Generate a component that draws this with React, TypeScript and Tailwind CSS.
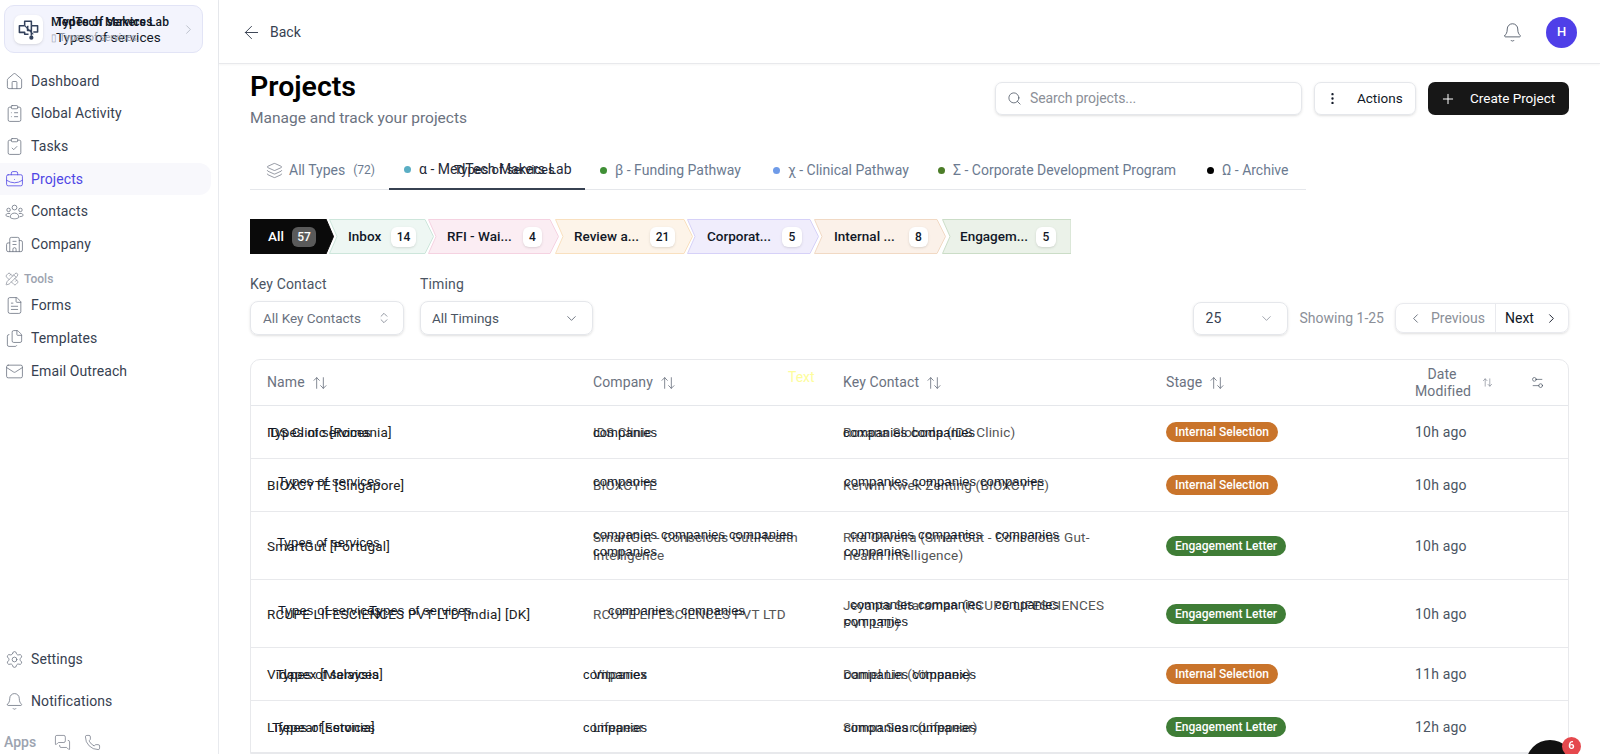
import {
  ArrowLeft,
  ArrowUpDown,
  Bell,
  BriefcaseBusiness,
  Building2,
  ChevronDown,
  ChevronLeft,
  ChevronRight,
  ChevronsUpDown,
  ClipboardCheck,
  ClipboardList,
  EllipsisVertical,
  FileText,
  Files,
  House,
  Layers,
  Mail,
  MessagesSquare,
  PencilRuler,
  Phone,
  Plus,
  Search,
  Settings,
  Settings2,
} from "lucide-react";
import type { ComponentType, ReactNode } from "react";

const FONT = "font-['Roboto','Noto_Sans',sans-serif]";

type IconType = ComponentType<{ size?: number; strokeWidth?: number; className?: string }>;

function GroupIcon({ size = 18, strokeWidth = 1, className }: { size?: number; strokeWidth?: number; className?: string }) {
  return (
    <svg width={size} height={size} viewBox="0 0 24 24" fill="none" stroke="currentColor" strokeWidth={strokeWidth} className={className}>
      <circle cx="12" cy="7" r="3" />
      <circle cx="4.5" cy="10" r="2.2" />
      <circle cx="19.5" cy="10" r="2.2" />
      <path d="M6.5 19.5c0-3.5 2.5-5.5 5.5-5.5s5.5 2 5.5 5.5c-1.5 1.2-3.3 1.7-5.5 1.7s-4-.5-5.5-1.7Z" />
      <path d="M6.5 14.5H3.5c-1.3 0-2.3 1-2.3 2.3 0 .9 1.5 1.6 4.3 1.7" />
      <path d="M17.5 14.5h3c1.3 0 2.3 1 2.3 2.3 0 .9-1.5 1.6-4.3 1.7" />
    </svg>
  );
}

const MAIN_NAV: { label: string; icon: IconType; active?: boolean }[] = [
  { label: "Dashboard", icon: House },
  { label: "Global Activity", icon: ClipboardList },
  { label: "Tasks", icon: ClipboardCheck },
  { label: "Projects", icon: BriefcaseBusiness, active: true },
  { label: "Contacts", icon: GroupIcon },
  { label: "Company", icon: Building2 },
];

const TOOLS_NAV: { label: string; icon: IconType }[] = [
  { label: "Forms", icon: FileText },
  { label: "Templates", icon: Files },
  { label: "Email Outreach", icon: Mail },
];

const STAGES = [
  { label: "All", count: "57", w: 84, fill: "#0a0a0a", line: "#0a0a0a", box: "w-[84px] pl-[18px] text-white", text: "w-[24px]", badge: "w-[24px] bg-[#5a5a5a] text-white" },
  { label: "Inbox", count: "14", w: 105, fill: "#eef7f3", line: "#cde6db", box: "w-[105px] -ml-[5px] pl-[19px] text-[#111827]", text: "w-[43px]", badge: "w-[25px] bg-white text-[#111827] shadow-sm" },
  { label: "RFI - Wai...", count: "4", w: 131, fill: "#fbedf3", line: "#f5d2e1", box: "w-[131px] -ml-[6px] pl-[19px] text-[#111827]", text: "w-[76px]", badge: "w-[19px] bg-white text-[#111827] shadow-sm" },
  { label: "Review a...", count: "21", w: 138, fill: "#fdf4e9", line: "#f9e0bf", box: "w-[138px] -ml-[4px] pl-[19px] text-[#111827]", text: "w-[76px]", badge: "w-[25px] bg-white text-[#111827] shadow-sm" },
  { label: "Corporat...", count: "5", w: 132, fill: "#f0edfc", line: "#d6d1f8", box: "w-[132px] -ml-[6px] pl-[20px] text-[#111827]", text: "w-[75px]", badge: "w-[20px] bg-white text-[#111827] shadow-sm" },
  { label: "Internal ...", count: "8", w: 132, fill: "#fbf1e9", line: "#f1d9c4", box: "w-[132px] -ml-[5px] pl-[20px] text-[#111827]", text: "w-[75px]", badge: "w-[19px] bg-white text-[#111827] shadow-sm" },
  { label: "Engagem...", count: "5", w: 129, fill: "#ebf2e9", line: "#cbddc7", box: "w-[129px] -ml-[4px] pl-[18px] text-[#111827]", text: "w-[76px]", badge: "w-[20px] bg-white text-[#111827] shadow-sm" },
];

const TABS = [
  { label: "α - MedTech Makers Lab", dot: "bg-[#5aaec4]", box: "w-[196px] pl-[15px]", active: true },
  { label: "β - Funding Pathway", dot: "bg-[#3f8f35]", box: "w-[171px] pl-[15px]" },
  { label: "χ - Clinical Pathway", dot: "bg-[#6f9be8]", box: "w-[169px] pl-[17px]" },
  { label: "Σ - Corporate Development Program", dot: "bg-[#4c7d28]", box: "w-[274px] pl-[13px]" },
  { label: "Ω - Archive", dot: "bg-black", box: "w-[92px] pl-[8px]" },
];

type Over = { text: string; className: string };
type Row = {
  name: string;
  company: string;
  contact: string;
  stage: "Internal Selection" | "Engagement Letter";
  date: string;
  height: string;
  overName: Over[];
  overCompany: Over[];
  overContact: Over[];
};

const ROWS: Row[] = [
  {
    name: "IDS Clinic [Romania]",
    company: "IDS Clinic",
    contact: "Roxana Sloboda (IDS Clinic)",
    stage: "Internal Selection",
    date: "10h ago",
    height: "h-[53px]",
    overName: [{ text: "Types of services", className: "left-[17px] top-[18px]" }],
    overCompany: [{ text: "companies", className: "left-0 top-[18px]" }],
    overContact: [{ text: "companies companies", className: "left-0 top-[18px]" }],
  },
  {
    name: "BIOXCYTE [Singapore]",
    company: "BIOXCYTE",
    contact: "Kerwin Kwek Zenting (BIOXCYTE)",
    stage: "Internal Selection",
    date: "10h ago",
    height: "h-[53px]",
    overName: [{ text: "Types of services", className: "left-[27px] top-[14px]" }],
    overCompany: [{ text: "companies", className: "left-0 top-[14px]" }],
    overContact: [{ text: "companies companies companies", className: "left-[1px] top-[14px]" }],
  },
  {
    name: "SmartGut [Portugal]",
    company: "SmartGut - Conscious Gut-Health Intelligence",
    contact: "Rita Oliveira (SmartGut - Conscious Gut-Health Intelligence)",
    stage: "Engagement Letter",
    date: "10h ago",
    height: "h-[68px]",
    overName: [{ text: "Types of services", className: "left-[26px] top-[22px]" }],
    overCompany: [
      { text: "companies companies companies", className: "left-0 top-[14px]" },
      { text: "companies", className: "left-0 top-[31px]" },
    ],
    overContact: [
      { text: "companies companies", className: "left-[7px] top-[14px]" },
      { text: "companies", className: "left-[152px] top-[14px]" },
      { text: "companies", className: "left-[1px] top-[31px]" },
    ],
  },
  {
    name: "RCUPE LIFESCIENCES PVT LTD [India] [DK]",
    company: "RCUPE LIFESCIENCES PVT LTD",
    contact: "Jeyanta Sitaraman (RCUPE LIFESCIENCES PVT LTD)",
    stage: "Engagement Letter",
    date: "10h ago",
    height: "h-[68px]",
    overName: [
      { text: "Types of services", className: "left-[27px] top-[22px]" },
      { text: "Types of services", className: "left-[118px] top-[22px]" },
    ],
    overCompany: [
      { text: "companies", className: "left-[15px] top-[22px]" },
      { text: "companies", className: "left-[88px] top-[22px]" },
    ],
    overContact: [
      { text: "companies companies", className: "left-[7px] top-[16px]" },
      { text: "companies", className: "left-[152px] top-[16px]" },
      { text: "companies", className: "left-[1px] top-[33px]" },
    ],
  },
  {
    name: "Vidapex [Malaysia]",
    company: "Vitpanex",
    contact: "Daniel Lin (Vitpanex)",
    stage: "Internal Selection",
    date: "11h ago",
    height: "h-[53px]",
    overName: [{ text: "Types of services", className: "left-[25px] top-[18px]" }],
    overCompany: [{ text: "companies", className: "-left-[10px] top-[18px]" }],
    overContact: [{ text: "companies companies", className: "left-[1px] top-[18px]" }],
  },
  {
    name: "Lifepear [Estonia]",
    company: "Lifepear",
    contact: "Simon Saar (Lifepear)",
    stage: "Engagement Letter",
    date: "12h ago",
    height: "h-[52px]",
    overName: [{ text: "Types of services", className: "left-[21px] top-[18px]" }],
    overCompany: [{ text: "companies", className: "-left-[10px] top-[18px]" }],
    overContact: [{ text: "companies companies", className: "left-[1px] top-[18px]" }],
  },
];

function Logo() {
  return (
    <svg viewBox="0 0 24 24" className="h-[23px] w-[23px] text-[#33415c]" fill="none" stroke="currentColor" strokeWidth="1.6" strokeLinejoin="round">
      <path d="M8 8V3.5h7V8" />
      <path d="M8 8H2.5v7H8v2h4" />
      <path d="M15 8h6.5v6.5H17" />
      <path d="M12 9h-1v4h4v5.5M15 8v5" />
      <path d="M8 8l9 9" strokeWidth="1.1" />
      <circle cx="15" cy="20.5" r="1.4" fill="currentColor" />
    </svg>
  );
}

function NavItem({ label, icon: Icon, active }: { label: string; icon: IconType; active?: boolean }) {
  return (
    <div className={`flex h-[32.6px] items-center gap-[7px] pl-[5px] text-[14px] tracking-[0.1px] ${active ? "rounded-r-xl bg-[#f8f8fc] text-[#4f46e5]" : "text-[#374151]"}`}>
      <Icon size={19} strokeWidth={1} className={active ? "text-[#4f46e5]" : "text-[#6b7280]"} />
      <span>{label}</span>
    </div>
  );
}

function SortHeader({ children }: { children: ReactNode }) {
  return (
    <div className="flex items-center gap-[7px]">
      {children}
      <ArrowUpDown size={16} strokeWidth={1.25} className="text-[#6b7280]" />
    </div>
  );
}

function Overlay({ items }: { items: Over[] }) {
  return (
    <>
      {items.map((o, i) => (
        <span key={i} className={`absolute whitespace-nowrap font-['Liberation_Sans',sans-serif] text-[13px] leading-[18px] tracking-[0.15px] text-[#111827] ${o.className}`}>
          {o.text}
        </span>
      ))}
    </>
  );
}

export default function App() {
  return (
    <div className={`flex h-screen overflow-hidden bg-white ${FONT}`}>
      <aside className="flex w-[219px] shrink-0 flex-col border-r border-[#e8eaee] pr-[7px]">
        <div className="relative mx-[4px] mt-[5px] flex h-[48px] w-[199px] items-center rounded-[10px] border border-[#e2e4f6] bg-[#f3f4fd] pl-[9px]">
          <div className="flex h-[29px] w-[29px] items-center justify-center rounded-[7px] bg-white shadow-sm">
            <Logo />
          </div>
          <div className="relative ml-[8px] h-full flex-1 text-[#111827]">
            <span className="absolute left-0 top-[9px] whitespace-nowrap text-[12px] font-medium leading-[14px] tracking-[0.15px]">MedTech Makers Lab</span>
            <span className="absolute left-[5px] top-[9px] whitespace-nowrap text-[12px] font-medium leading-[14px] tracking-[0.15px]">Types of services</span>
            <span className="absolute left-[5px] top-[23px] whitespace-nowrap text-[13.5px] leading-[16px]">Types of services</span>
            <span className="absolute left-0 top-[25px] whitespace-nowrap text-[10px] leading-[14px] text-[#9ca3af]">▯ Types of services.</span>
          </div>
          <ChevronRight size={15} strokeWidth={1} className="mr-[6px] text-[#9ca3af]" />
        </div>

        <nav className="mt-[12px] flex flex-col">
          {MAIN_NAV.map((item) => (
            <NavItem key={item.label} {...item} />
          ))}
        </nav>

        <div className="mt-[10px] flex h-[16px] items-center gap-[5px] pl-[5px] text-[12px] font-medium text-[#9ca3af]">
          <PencilRuler size={14} strokeWidth={1} className="text-[#6b7280]" />
          <span>Tools</span>
        </div>
        <nav className="mt-[3px] flex flex-col">
          {TOOLS_NAV.map((item) => (
            <NavItem key={item.label} {...item} />
          ))}
        </nav>

        <div className="mt-auto flex flex-col gap-[10px]">
          <NavItem label="Settings" icon={Settings} />
          <NavItem label="Notifications" icon={Bell} />
        </div>
        <div className="mb-[3px] mt-[15px] flex h-[18px] items-center pl-[4px] text-[14px] font-medium text-[#9ca3af]">
          <span>Apps</span>
          <MessagesSquare size={17} strokeWidth={1} className="ml-[18px] text-[#6b7280]" />
          <Phone size={17} strokeWidth={1} className="ml-[13px] text-[#6b7280]" />
        </div>
      </aside>

      <div className="flex min-w-0 flex-1 flex-col">
        <header className="flex h-[64px] shrink-0 items-center border-b border-[#e8e9ec] pl-[24px] pr-[23px] pt-[1px] shadow-[0_1px_2px_rgba(0,0,0,0.04)]">
          <ArrowLeft size={21} strokeWidth={1.1} className="-ml-[2px] text-[#374151]" />
          <span className="ml-[8px] text-[14px] text-[#374151]">Back</span>
          <Bell size={21} strokeWidth={1} className="ml-auto text-[#4b5563]" />
          <div className="ml-[23px] flex h-[31px] w-[31px] items-center justify-center rounded-full bg-[#4f3fe8] text-[13px] font-medium text-white">H</div>
        </header>

        <main className="flex-1 pl-[31px] pr-[31px]">
          <div className="flex h-[76px] items-start">
            <div className="pt-[5px]">
              <h1 className="text-[28.5px] font-semibold leading-[36px] text-black">Projects</h1>
              <p className="mt-[3px] text-[15.5px] leading-[21px] text-[#6b7280]">Manage and track your projects</p>
            </div>
            <div className="ml-auto mt-[18px] flex items-center">
              <div className="flex h-[33px] w-[307px] items-center gap-[8px] rounded-[7px] border border-[#e5e7eb] pl-[11px] shadow-sm">
                <Search size={15} strokeWidth={1.25} className="text-[#4b5563]" />
                <span className="text-[14px] tracking-[-0.1px] text-[#8b8f98]">Search projects...</span>
              </div>
              <div className="ml-[12px] flex h-[33px] w-[102px] items-center rounded-[7px] border border-[#e5e7eb] pl-[10px] text-[13.5px] font-normal text-[#111827] shadow-sm">
                <EllipsisVertical size={15} strokeWidth={1.75} />
                <span className="ml-[17px]">Actions</span>
              </div>
              <div className="ml-[12px] flex h-[33px] w-[141px] items-center rounded-[7px] bg-[#171717] pl-[12px] text-[13.5px] font-normal text-white">
                <Plus size={16} strokeWidth={1.5} />
                <span className="ml-[14px]">Create Project</span>
              </div>
            </div>
          </div>

          <div className="mt-[14px] flex h-[36px] w-[1056px] border-b border-[#e5e7eb] text-[14px] text-[#6b7a90]">
            <div className="flex w-[139px] items-center pb-[3px] pl-[16px]">
              <Layers size={17} strokeWidth={1} className="text-[#6b7280]" />
              <span className="ml-[6px]">All Types</span>
              <span className="ml-[8px] text-[12px]">(72)</span>
            </div>
            {TABS.map((t) => (
              <div key={t.label} className={`relative flex items-center gap-[8px] pb-[3px] ${t.box} ${t.active ? "-mb-px border-b-2 border-[#374151] text-[#1f2937]" : ""}`}>
                <span className={`h-[7px] w-[7px] shrink-0 rounded-full ${t.dot}`} />
                <span className="whitespace-nowrap">{t.label}</span>
                {t.active && <span className="absolute left-[65px] top-[6px] whitespace-nowrap text-[13px] text-[#1f2937]">Types of services</span>}
              </div>
            ))}
          </div>

          <div className="mt-[29px] flex h-[35px]">
            {STAGES.map((s, i) => (
              <div key={s.label} className={`relative flex h-[35px] shrink-0 items-center text-[13.5px] font-medium ${s.box}`}>
                <svg className="absolute left-0 top-0 h-full w-full" viewBox={`0 0 ${s.w} 35`} preserveAspectRatio="none" fill={s.fill} stroke={s.line}>
                  <path d={i === 0 ? `M0 0H${s.w - 8}L${s.w - 0.5} 17.5L${s.w - 8} 35H0Z` : i === STAGES.length - 1 ? `M0.5 0.5H${s.w}V34.5H0.5L8 17.5Z` : `M0.5 0.5H${s.w - 9}L${s.w - 0.5} 17.5L${s.w - 9} 34.5H0.5L8 17.5Z`} />
                </svg>
                <span className={`relative whitespace-nowrap ${s.text}`}>{s.label}</span>
                <span className={`relative flex h-[20px] items-center justify-center rounded-[6px] text-[12px] font-medium ${s.badge}`}>{s.count}</span>
              </div>
            ))}
          </div>

          <div className="mt-[20px] flex items-end">
            <div>
              <div className="mb-[7px] text-[14px] leading-[20px] tracking-[0.15px] text-[#4b5563]">Key Contact</div>
              <div className="flex h-[34px] w-[154px] items-center justify-between rounded-[8px] border border-[#e5e7eb] pl-[12px] pr-[12px] text-[13.5px] text-[#6b7280] shadow-sm">
                All Key Contacts
                <ChevronsUpDown size={14} strokeWidth={1.25} />
              </div>
            </div>
            <div className="ml-[16px]">
              <div className="mb-[7px] text-[14px] leading-[20px] tracking-[0.15px] text-[#4b5563]">Timing</div>
              <div className="flex h-[34px] w-[173px] items-center justify-between rounded-[8px] border border-[#e5e7eb] pl-[11px] pr-[13px] text-[13.5px] text-[#4b5563] shadow-sm">
                All Timings
                <ChevronDown size={15} strokeWidth={1.25} />
              </div>
            </div>
            <div className="ml-auto flex h-[34px] items-center">
              <div className="flex h-[33px] w-[95px] items-center justify-between rounded-[8px] border border-[#e5e7eb] pl-[12px] pr-[13px] text-[14px] text-[#374151] shadow-sm">
                25
                <ChevronDown size={15} strokeWidth={1} className="text-[#6b7280]" />
              </div>
              <span className="ml-[12px] text-[14px] text-[#8b8f98]">Showing 1-25</span>
              <div className="ml-[11px] flex h-[30px] w-[174px] rounded-[8px] border border-[#e9eaee] text-[14px] shadow-sm">
                <div className="flex w-[99px] items-center pl-[12px] text-[#8b8f98]">
                  <ChevronLeft size={15} strokeWidth={1.25} className="text-[#4b5563]" />
                  <span className="ml-[8px]">Previous</span>
                </div>
                <div className="flex flex-1 items-center rounded-r-[8px] border-l border-[#e9eaee] pl-[9px] text-[#111827]">
                  Next
                  <ChevronRight size={15} strokeWidth={1.5} className="ml-[10px]" />
                </div>
              </div>
            </div>
          </div>

          <div className="relative mt-[24px] rounded-t-[10px] border border-[#e8e9ec] text-[14px]">
            <div className="grid h-[46px] grid-cols-[342px_250px_323px_249px_1fr] items-center border-b border-[#e5e7eb] text-[14px] tracking-[0.1px] text-[#6b7280]">
              <div className="pl-[16px]">
                <SortHeader>Name</SortHeader>
              </div>
              <SortHeader>Company</SortHeader>
              <SortHeader>Key Contact</SortHeader>
              <SortHeader>Stage</SortHeader>
              <div className="relative flex items-center">
                <div className="flex items-center gap-[13px]">
                  <div className="w-[54px] text-center text-[14px] leading-[17px]">Date Modified</div>
                  <ArrowUpDown size={11} strokeWidth={1.25} />
                </div>
                <Settings2 size={15} strokeWidth={1} className="absolute right-[23px] text-[#374151]" />
              </div>
            </div>
            <span className="absolute left-[537px] top-[7px] text-[14px] text-[#fdfd9c]">Text</span>
            {ROWS.map((row) => (
              <div key={row.name} className={`grid grid-cols-[342px_250px_323px_249px_1fr] items-center border-b border-[#e8e9ec] text-[13.5px] leading-[18px] tracking-[0.2px] ${row.height}`}>
                <div className="relative flex h-full items-center pl-[16px] text-[#222]">
                  {row.name}
                  <Overlay items={row.overName} />
                </div>
                <div className="relative flex h-full items-center pr-[24px] text-[#555]">
                  {row.company}
                  <Overlay items={row.overCompany} />
                </div>
                <div className="relative flex h-full items-center pr-[43px] text-[#555]">
                  {row.contact}
                  <Overlay items={row.overContact} />
                </div>
                <div>
                  <span className={`inline-flex h-[20px] items-center rounded-full px-[9px] text-[12px] font-medium tracking-normal text-white ${row.stage === "Internal Selection" ? "bg-[#c9742b]" : "bg-[#3f7d36]"}`}>
                    {row.stage}
                  </span>
                </div>
                <div className="text-[14px] text-[#4b5563]">{row.date}</div>
              </div>
            ))}
          </div>
        </main>
      </div>

      <div className="fixed left-[1526px] top-[740px] h-[48px] w-[48px] rounded-full bg-[#111]" />
      <div className="fixed left-[1562px] top-[737px] flex h-[19px] w-[19px] items-center justify-center rounded-full bg-[#e5484d] text-[11px] font-semibold text-white">6</div>
    </div>
  );
}
